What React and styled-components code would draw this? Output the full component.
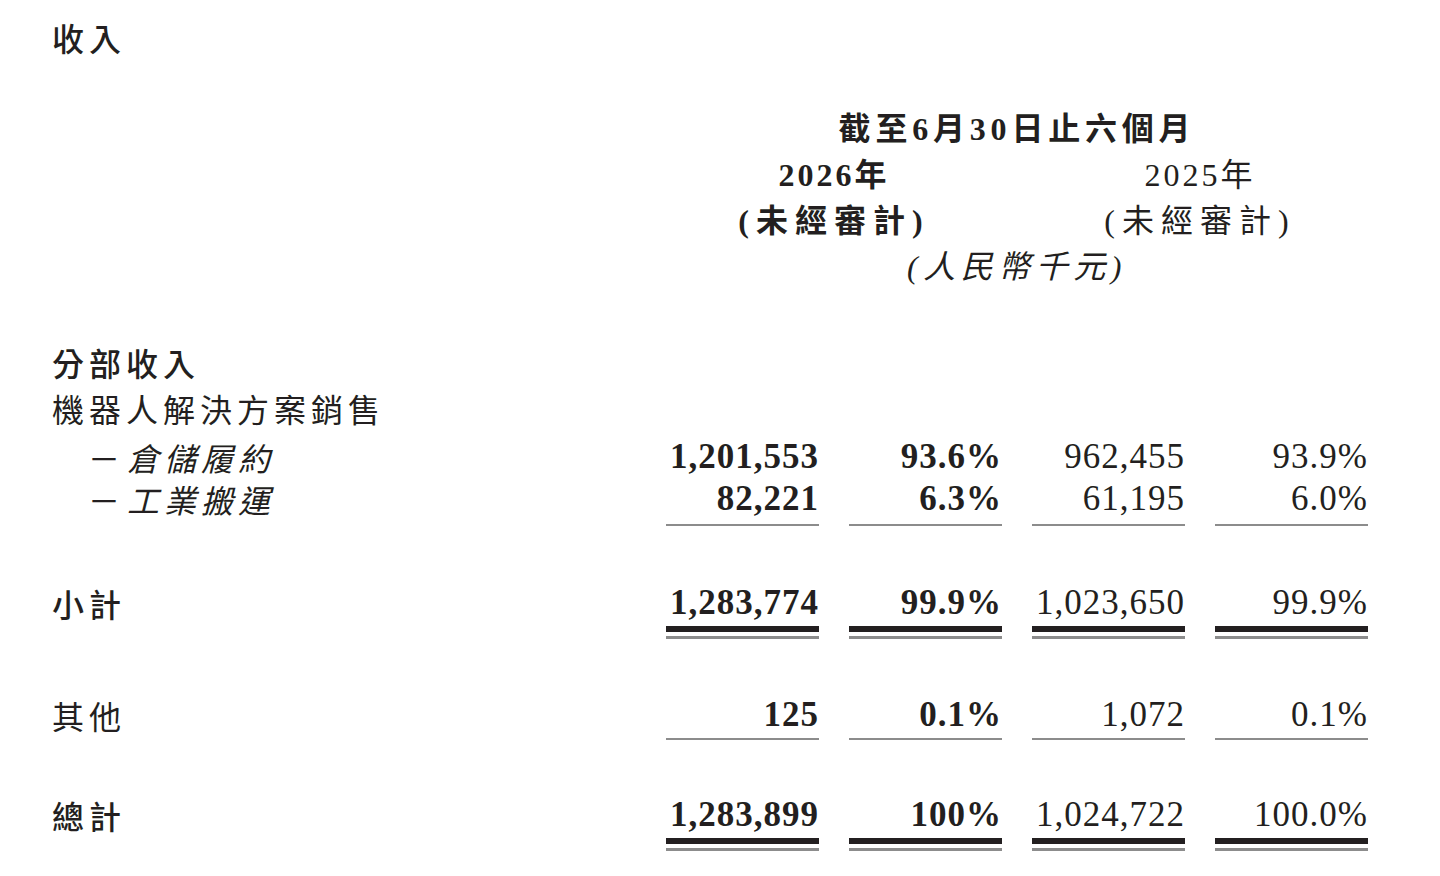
import React from 'react';
import styled, { createGlobalStyle, css } from 'styled-components';

const INK = '#231f20';
const RULE_GREY = '#8c8c8c';

const GlobalStyle = createGlobalStyle`
  html, body {
    margin: 0;
    background: #fff;
  }
  body {
    font-family: "Noto Sans CJK TC", "Noto Sans CJK SC", sans-serif;
    color: ${INK};
  }
`;

const Page = styled.div`
  width: 1440px;
  height: 876px;
  box-sizing: border-box;
  padding: 17px 0 0 52px;
  overflow: hidden;
  background: #fff;
`;

const Title = styled.h2`
  margin: 0;
  font-size: 32px;
  font-weight: 500;
  line-height: 40px;
  letter-spacing: 5px;
`;

// same column template for the header block and every row of the table
const Grid = styled.div`
  display: grid;
  grid-template-columns: 584px repeat(4, 153px);
  column-gap: 30px;
  margin-top: ${p => p.$top || 0}px;
`;

const HeadCell = styled.div`
  grid-column: ${p => p.$span};
  text-align: center;
  line-height: 46px;
  font-size: 32px;
  white-space: nowrap;
  font-family: "Liberation Serif", "Noto Sans CJK TC", serif;
  font-weight: ${p => (p.$bold ? 700 : 400)};
  font-style: ${p => (p.$italic ? 'italic' : 'normal')};
  letter-spacing: ${p => p.$spacing || 4}px;
`;

const SectionLabel = styled.div`
  grid-column: 1 / 2;
  font-size: 32px;
  line-height: 46px;
  letter-spacing: 5px;
  white-space: nowrap;
  font-weight: ${p => (p.$strong ? 500 : 400)};
`;

const Label = styled.div`
  font-size: 32px;
  line-height: 42px;
  letter-spacing: 5px;
  white-space: nowrap;
  font-weight: ${p => (p.$strong ? 500 : 400)};
`;

const SubLabel = styled(Label)`
  padding-left: 36px;
  font-style: italic;
  letter-spacing: 5px;
`;

const Dash = styled.span`
  font-style: normal;
  letter-spacing: 0;
  margin-right: 7px;
`;

const rules = {
  single: css`
    padding-bottom: ${p => p.$pad ?? 4}px;
    border-bottom: 2px solid ${RULE_GREY};
  `,
  double: css`
    padding-bottom: 2px;
    border-bottom: 6px solid ${INK};
    box-shadow: 0 4px 0 #fff, 0 7px 0 ${RULE_GREY};
  `,
};

const Num = styled.div`
  align-self: start;
  text-align: right;
  font-family: "Liberation Serif", "Times New Roman", serif;
  font-size: 35px;
  line-height: 42px;
  letter-spacing: 1px;
  white-space: nowrap;
  font-weight: ${p => (p.$bold ? 700 : 400)};
  ${p => p.$rule && rules[p.$rule]}
`;

const ROWS = [
  {
    label: '倉儲履約',
    sub: true,
    top: 5,
    values: ['1,201,553', '93.6%', '962,455', '93.9%'],
  },
  {
    label: '工業搬運',
    sub: true,
    values: ['82,221', '6.3%', '61,195', '6.0%'],
    rule: 'single',
  },
  {
    label: '小計',
    strong: true,
    top: 56,
    values: ['1,283,774', '99.9%', '1,023,650', '99.9%'],
    rule: 'double',
  },
  {
    label: '其他',
    top: 62,
    values: ['125', '0.1%', '1,072', '0.1%'],
    rule: 'single',
    pad: 2,
  },
  {
    label: '總計',
    strong: true,
    top: 54,
    values: ['1,283,899', '100%', '1,024,722', '100.0%'],
    rule: 'double',
  },
];

function DataRow({ row }) {
  return (
    <Grid $top={row.top}>
      {row.sub ? (
        <SubLabel>
          <Dash>－</Dash>
          {row.label}
        </SubLabel>
      ) : (
        <Label $strong={row.strong}>{row.label}</Label>
      )}
      {row.values.map((v, i) => (
        // the 2026 columns (first two) are set in bold
        <Num key={i} $bold={i < 2} $rule={row.rule} $pad={row.pad}>
          {v}
        </Num>
      ))}
    </Grid>
  );
}

export default function App() {
  return (
    <Page>
      <GlobalStyle />
      <Title>收入</Title>

      <Grid $top={49}>
        <HeadCell $span="2 / 6" $bold $spacing={4.8}>
          截至6月30日止六個月
        </HeadCell>
        <HeadCell $span="2 / 4" $bold $spacing={3}>
          2026年
        </HeadCell>
        <HeadCell $span="4 / 6" $spacing={3}>
          2025年
        </HeadCell>
        <HeadCell $span="2 / 4" $bold $spacing={7}>
          (未經審計)
        </HeadCell>
        <HeadCell $span="4 / 6" $spacing={7}>
          (未經審計)
        </HeadCell>
        <HeadCell $span="2 / 6" $italic $spacing={5.5}>
          (人民幣千元)
        </HeadCell>
      </Grid>

      <Grid $top={49}>
        <SectionLabel $strong>分部收入</SectionLabel>
        <SectionLabel>機器人解決方案銷售</SectionLabel>
      </Grid>

      {ROWS.map(row => (
        <DataRow key={row.label} row={row} />
      ))}
    </Page>
  );
}
